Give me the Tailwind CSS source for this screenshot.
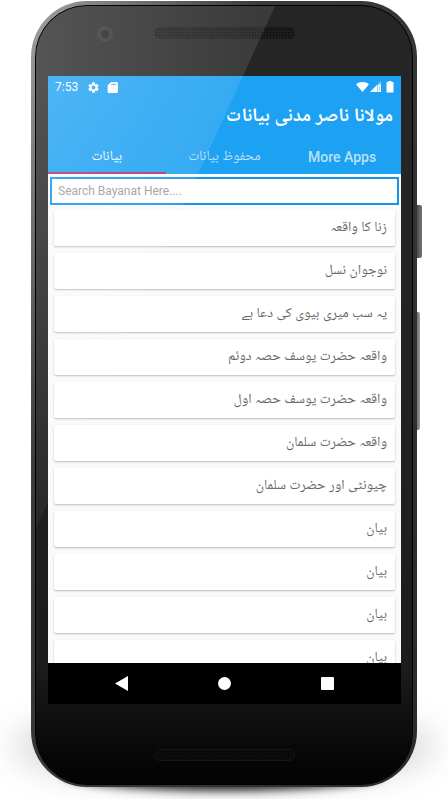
<!DOCTYPE html>
<html lang="ur">
<head>
  <meta charset="UTF-8">
  <meta name="viewport" content="width=device-width, initial-scale=1">
  <script src="https://cdn.jsdelivr.net/npm/@tailwindcss/browser@4"></script>
  <title>مولانا ناصر مدنی بیانات</title>
</head>
<body class="bg-white overflow-hidden font-['Roboto','Noto_Naskh_Arabic_UI','Noto_Naskh_Arabic','DejaVu_Sans',sans-serif]">
  <div class="relative mx-auto max-w-md px-[31px] pt-px pb-3">
    <!-- floor shadow -->
    <div class="absolute inset-x-3 bottom-3 h-20 rounded-[50%] bg-black/15 blur-lg"></div>
    <div class="absolute inset-x-16 bottom-2 h-8 rounded-[50%] bg-black/80 blur-xs"></div>
    <!-- side buttons -->
    <div class="absolute right-[26px] top-[205px] h-[53px] w-2 rounded-r-xs bg-linear-to-r from-[#333] to-[#777]"></div>
    <div class="absolute right-[28px] top-[312px] h-[118px] w-2 rounded-r-xs bg-linear-to-r from-[#333] to-[#999]"></div>

    <div class="relative rounded-[56px] bg-linear-to-br from-[#a0a5a2] via-[#3c3a3b] via-30% to-[#2b2b2b] px-[4px] pt-[4px] pb-[2px]">
      <div class="relative overflow-hidden rounded-[52px] border border-black bg-linear-to-b from-[#252525] from-30% via-[#1c1c1c] via-85% to-[#030303] pl-3 pr-[11px]">
        <!-- glass reflection -->
        <div class="pointer-events-none absolute inset-0 z-10 bg-linear-to-r from-white/22 to-white/10 to-60% mask-b-from-10% mask-b-to-80% [clip-path:polygon(0_0,239px_0,-104px_750px,0_750px)]"></div>

        <div class="flex h-[70px] items-start justify-center pt-[21px]">
          <div class="absolute left-[61px] top-5 flex size-4 items-center justify-center rounded-full bg-[#303030]">
            <div class="size-2 rounded-full bg-[#1b1a24]"></div>
          </div>
          <div class="h-3 w-[141px] rounded-full border border-[#181818] bg-[#1c1c1c] bg-[radial-gradient(#050505_1px,transparent_1px)] bg-size-[3px_3px]"></div>
        </div>

        <main class="flex h-[628px] flex-col overflow-hidden bg-[#fafafa]">
          <header class="bg-[#1da1f2] text-white">
            <div class="flex h-[22px] items-center px-[7px] text-xs">
              <span>7:53</span>
              <svg class="ml-[9px] size-[13px]" viewBox="0 0 24 24" fill="currentColor"><path d="M19.14 12.94c.04-.3.06-.61.06-.94s-.02-.64-.07-.94l2.03-1.58a.49.49 0 0 0 .12-.61l-1.92-3.32a.49.49 0 0 0-.59-.22l-2.39.96c-.5-.38-1.03-.7-1.62-.94l-.36-2.54a.48.48 0 0 0-.48-.41h-3.84c-.24 0-.43.17-.47.41l-.36 2.54c-.59.24-1.13.57-1.62.94l-2.39-.96a.48.48 0 0 0-.59.22L2.74 8.87a.48.48 0 0 0 .12.61l2.03 1.58c-.05.3-.09.63-.09.94s.02.64.07.94l-2.03 1.58a.49.49 0 0 0-.12.61l1.92 3.32c.12.22.37.29.59.22l2.39-.96c.5.38 1.03.7 1.62.94l.36 2.54c.05.24.24.41.48.41h3.84c.24 0 .44-.17.47-.41l.36-2.54c.59-.24 1.13-.56 1.62-.94l2.39.96c.22.08.47 0 .59-.22l1.92-3.32a.48.48 0 0 0-.12-.61zM12 15.6A3.6 3.6 0 1 1 12 8.4a3.6 3.6 0 0 1 0 7.2z"/></svg>
              <svg class="ml-[6px] size-[13px]" viewBox="0 0 24 24" fill="currentColor"><path fill-rule="evenodd" d="M20 2H10L3 8v12q0 2 2 2h15q2 0 2-2V4q0-2-2-2zM12 8h-2V5h2zm3 0h-2V5h2zm3 0h-2V5h2z"/></svg>
              <svg class="ml-auto h-3 w-[13px]" viewBox="0 0 13 12" fill="currentColor"><path d="M0 3.300C3.500.2 9.500.2 13 3.300L6.500 11z"/></svg>
              <svg class="ml-px h-3 w-[11px]" viewBox="0 0 11 12" fill="currentColor"><path d="M11 0v11H0z" opacity=".5"/><path d="M7 4v7H0zM8 4h3v7H8zM9 5v5h1V5z" fill-rule="evenodd"/></svg>
              <svg class="ml-[5px] h-3 w-2" viewBox="0 0 8 12" fill="currentColor"><path d="M2.500 0h3v1H7q.5 0 .5.500v9.500q0 .5-.5.500H1q-.5 0-.5-.500V1.500Q.5 1 1 1h1.500z"/></svg>
            </div>
            <h1 dir="rtl" class="flex h-10 items-center px-2 text-[19px] font-bold">مولانا ناصر مدنی بیانات</h1>
            <nav class="grid h-9 grid-cols-3 text-center text-sm font-medium">
              <button class="border-b-2 border-[#b0306a] pt-1 font-normal">بیانات</button>
              <button class="border-b-2 border-transparent pt-1 font-normal text-white/70">محفوظ بیانات</button>
              <button class="border-b-2 border-transparent pt-1 text-white/70">More Apps</button>
            </nav>
          </header>

          <div class="px-[2px] pt-[3px]">
            <input type="text" aria-label="Search" placeholder="Search Bayanat Here...." class="block h-7 w-full border-2 border-[#1595ea] bg-white px-[6px] text-xs text-[#555] placeholder:text-[#999] outline-none">
          </div>

          <ul dir="rtl" class="min-h-0 flex-1 space-y-[7px] overflow-hidden px-[6px] pt-[5px] text-sm text-[#666]">
            <li class="flex h-9 items-center rounded-xs bg-white px-2 shadow-[0_1px_2px_rgba(0,0,0,0.25)]">زنا کا واقعہ</li>
            <li class="flex h-9 items-center rounded-xs bg-white px-2 shadow-[0_1px_2px_rgba(0,0,0,0.25)]">نوجوان نسل</li>
            <li class="flex h-9 items-center rounded-xs bg-white px-2 shadow-[0_1px_2px_rgba(0,0,0,0.25)]">یہ سب میری بیوی کی دعا ہے</li>
            <li class="flex h-9 items-center rounded-xs bg-white px-2 shadow-[0_1px_2px_rgba(0,0,0,0.25)]">واقعہ حضرت یوسف حصہ دوئم</li>
            <li class="flex h-9 items-center rounded-xs bg-white px-2 shadow-[0_1px_2px_rgba(0,0,0,0.25)]">واقعہ حضرت یوسف حصہ اول</li>
            <li class="flex h-9 items-center rounded-xs bg-white px-2 shadow-[0_1px_2px_rgba(0,0,0,0.25)]">واقعہ حضرت سلمان</li>
            <li class="flex h-9 items-center rounded-xs bg-white px-2 shadow-[0_1px_2px_rgba(0,0,0,0.25)]">چیونٹی اور حضرت سلمان</li>
            <li class="flex h-9 items-center rounded-xs bg-white px-2 shadow-[0_1px_2px_rgba(0,0,0,0.25)]">بیان</li>
            <li class="flex h-9 items-center rounded-xs bg-white px-2 shadow-[0_1px_2px_rgba(0,0,0,0.25)]">بیان</li>
            <li class="flex h-9 items-center rounded-xs bg-white px-2 shadow-[0_1px_2px_rgba(0,0,0,0.25)]">بیان</li>
            <li class="flex h-9 items-center rounded-xs bg-white px-2 shadow-[0_1px_2px_rgba(0,0,0,0.25)]">بیان</li>
          </ul>

          <nav class="flex h-[41px] shrink-0 items-center justify-between bg-black px-[67px] text-white">
            <button aria-label="Back"><svg class="h-[15px] w-[13px]" viewBox="0 0 13 15" fill="currentColor"><path d="M13 0v15L0 7.500z"/></svg></button>
            <button aria-label="Home" class="size-[13px] rounded-full bg-white"></button>
            <button aria-label="Recent" class="size-[13px] rounded-[1px] bg-white"></button>
          </nav>
        </main>

        <div class="flex h-[80px] items-end justify-center pb-[23px]">
          <div class="h-3 w-[141px] rounded-full border border-[#161616] bg-[#0c0c0c] bg-[radial-gradient(#000_1px,transparent_1px)] bg-size-[3px_3px]"></div>
        </div>
      </div>
    </div>
  </div>
</body>
</html>
